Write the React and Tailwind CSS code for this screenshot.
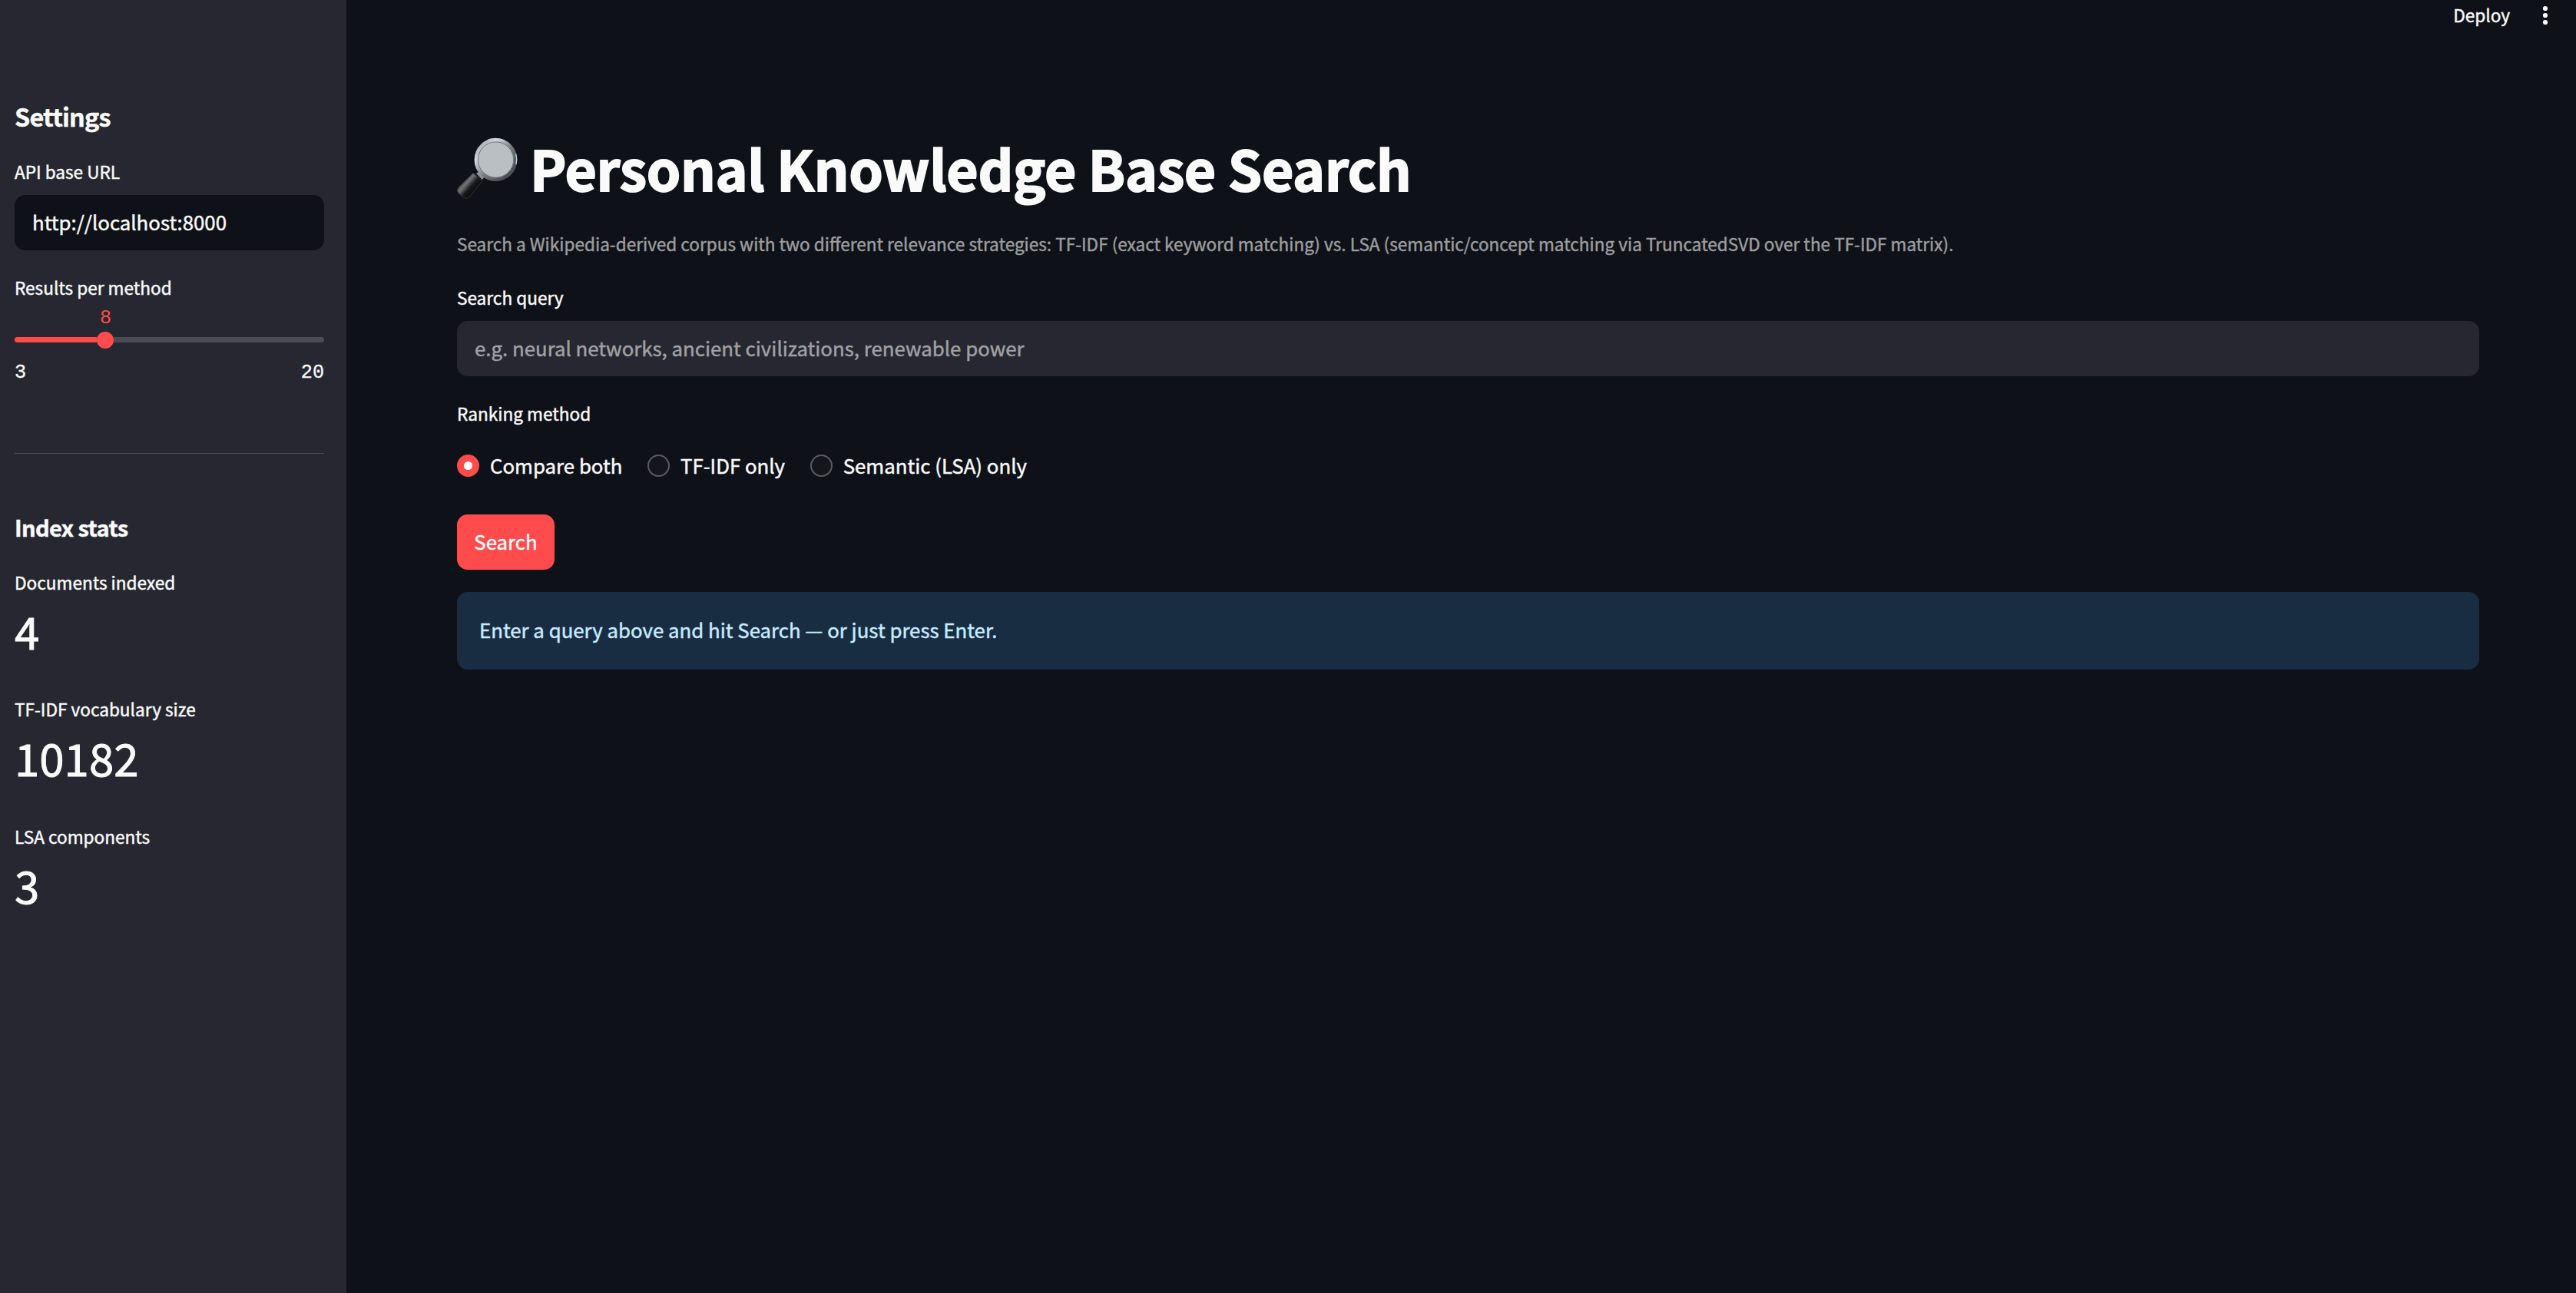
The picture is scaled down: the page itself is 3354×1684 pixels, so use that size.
import React from 'react';

const stats = [
  { label: 'Documents indexed', value: '4' },
  { label: 'TF-IDF vocabulary size', value: '10182' },
  { label: 'LSA components', value: '3' },
];

const methods = ['Compare both', 'TF-IDF only', 'Semantic (LSA) only'];

function MagnifierIcon() {
  return (
    <svg className="w-[100px] h-[100px] flex-shrink-0" viewBox="0 0 100 100">
      <defs>
        <linearGradient id="rim" x1="0" y1="0" x2="1" y2="1">
          <stop offset="0" stopColor="#8d8f91" />
          <stop offset="0.25" stopColor="#d5dadd" />
          <stop offset="0.55" stopColor="#77797b" />
          <stop offset="0.85" stopColor="#4b4c4e" />
          <stop offset="1" stopColor="#9fa2a4" />
        </linearGradient>
        <linearGradient id="handle" x1="10" y1="66" x2="28" y2="82" gradientUnits="userSpaceOnUse">
          <stop offset="0" stopColor="#2a2a2c" />
          <stop offset="0.3" stopColor="#757577" />
          <stop offset="0.6" stopColor="#1a1a1c" />
          <stop offset="1" stopColor="#050506" />
        </linearGradient>
      </defs>
      <path d="M26 55.5 L38 65.5 L21 86.5 Q17.5 90 13 86.5 L7 81.5 Q4 78 7 74 Z" fill="url(#handle)" stroke="#3c3d40" strokeWidth="0.8" />
      <path d="M30 56 L34 53 L41 60 L38 64 Z" fill="#8f9193" />
      <circle cx="55.5" cy="38" r="25.6" fill="#b9bfc3" stroke="url(#rim)" strokeWidth="4.6" />
      <circle cx="55.5" cy="38" r="23.2" fill="none" stroke="#6d7174" strokeWidth="1" />
      <path d="M46 11.8 A27.3 27.3 0 0 1 67 13.2" fill="none" stroke="#b5dcf5" strokeWidth="1.2" />
      <path d="M81.5 30 A27.3 27.3 0 0 1 82 44" fill="none" stroke="#a9d4f2" strokeWidth="1.2" />
    </svg>
  );
}

export default function App() {
  return (
    <div className="flex w-full h-[1684px] bg-[#0e1117] text-[#fafafa] font-['Noto_Sans_CJK_SC',sans-serif] [-webkit-text-stroke:0.45px] overflow-hidden">
      {/* Sidebar */}
      <aside className="w-[451px] flex-shrink-0 bg-[#262730] pl-[19px] pr-[29px] pt-[129px]">
        <h2 className="text-[32.4px] leading-[44px] font-semibold tracking-[-0.8px]">Settings</h2>
        <p className="mt-[33px] text-[22.6px] leading-9">API base URL</p>
        <div className="mt-3 h-[72px] rounded-[14px] bg-[#0e1117] flex items-center px-[23px] pb-0.5 text-[25.8px]">
          http://localhost:8000
        </div>

        <p className="mt-[31px] text-[22.6px] leading-9">Results per method</p>
        <div className="mt-[7px] font-['Liberation_Mono',monospace] text-[25.2px] leading-[30px] [-webkit-text-stroke:0]">
          <div className="w-[237px] text-center text-[#ff4b4b]">8</div>
          <div className="mt-0.5 h-[22px] flex items-start">
            <div className="mt-[7px] w-[107px] h-[7px] rounded-l-full bg-[#ff4b4b]" />
            <div className="w-[22px] h-[22px] rounded-full bg-[#ff4b4b]" />
            <div className="mt-[7px] flex-1 h-[7px] rounded-r-full bg-[#4b4d56]" />
          </div>
          <div className="mt-[17px] flex justify-between [-webkit-text-stroke:0.3px]">
            <span>3</span>
            <span>20</span>
          </div>
        </div>

        <div className="mt-[89px] h-px bg-[#4b4c55]" />

        <h3 className="mt-[75px] text-[29.1px] leading-10 font-semibold tracking-[-0.65px]">Index stats</h3>
        <div className="mt-[35px] flex flex-col gap-[45.4px]">
          {stats.map((s) => (
            <div key={s.label}>
              <p className="text-[22.6px] leading-9">{s.label}</p>
              <p className="mt-1 text-[58.2px] leading-[80px] [-webkit-text-stroke:0.9px]">{s.value}</p>
            </div>
          ))}
        </div>
      </aside>

      <div className="flex-1 flex flex-col">
        {/* Toolbar */}
        <header className="h-10 flex justify-end items-center pr-9 pb-px text-[22.6px] leading-9">
          <span className="mr-[42px]">Deploy</span>
          <svg className="w-2 h-10" viewBox="0 0 8 40" fill="#fafafa">
            <circle cx="4" cy="11" r="3.1" />
            <circle cx="4" cy="20" r="3.1" />
            <circle cx="4" cy="29" r="3.1" />
          </svg>
        </header>

        <main className="pl-36 pr-[126px] pt-[130px]">
          <h1 className="flex items-center h-24 text-[71.3px] leading-[96px] font-bold whitespace-nowrap tracking-[-0.32px] [-webkit-text-stroke:1.8px]">
            <span className="-ml-[5px] pt-1"><MagnifierIcon /></span>
            <span>Personal Knowledge Base Search</span>
          </h1>
          <p className="mt-[34px] text-[22.57px] leading-9 text-[#9c9d9f] whitespace-nowrap">
            Search a Wikipedia-derived corpus with two different relevance strategies: TF-IDF (exact keyword matching) vs. LSA (semantic/concept matching via TruncatedSVD over the TF-IDF matrix).
          </p>

          <p className="mt-[34px] text-[22.6px] leading-9">Search query</p>
          <div className="mt-3 h-[72px] rounded-[14px] bg-[#262730] flex items-center px-[23px] pb-0.5 text-[25.8px] text-[#a1a1a4]">
            e.g. neural networks, ancient civilizations, renewable power
          </div>

          <p className="mt-[31px] text-[22.6px] leading-9">Ranking method</p>
          <div className="mt-[35px] h-[29px] flex items-center gap-[32.6px] text-[25.8px] leading-[29px]">
            {methods.map((m, i) => (
              <label key={m} className="flex items-center gap-[14px]">
                {i === 0 ? (
                  <div className="w-[29px] h-[29px] rounded-full border-[9px] border-[#ff4b4b] bg-white" />
                ) : (
                  <div className="w-[29px] h-[29px] rounded-full border-2 border-[#5a5b60] bg-[#13161b]" />
                )}
                <span className="pb-0.5">{m}</span>
              </label>
            ))}
          </div>

          <button className="mt-[49px] h-[72px] w-[127px] flex items-center justify-center pb-0.5 rounded-[14px] bg-[#ff4b4b] text-white text-[25.8px]">
            Search
          </button>

          <div className="mt-[29px] h-[101px] rounded-[14px] bg-[#192d42] flex items-center px-[29px] pb-[3px] text-[25.8px] text-[#c7ebff]">
            Enter a query above and hit Search — or just press Enter.
          </div>
        </main>
      </div>
    </div>
  );
}
